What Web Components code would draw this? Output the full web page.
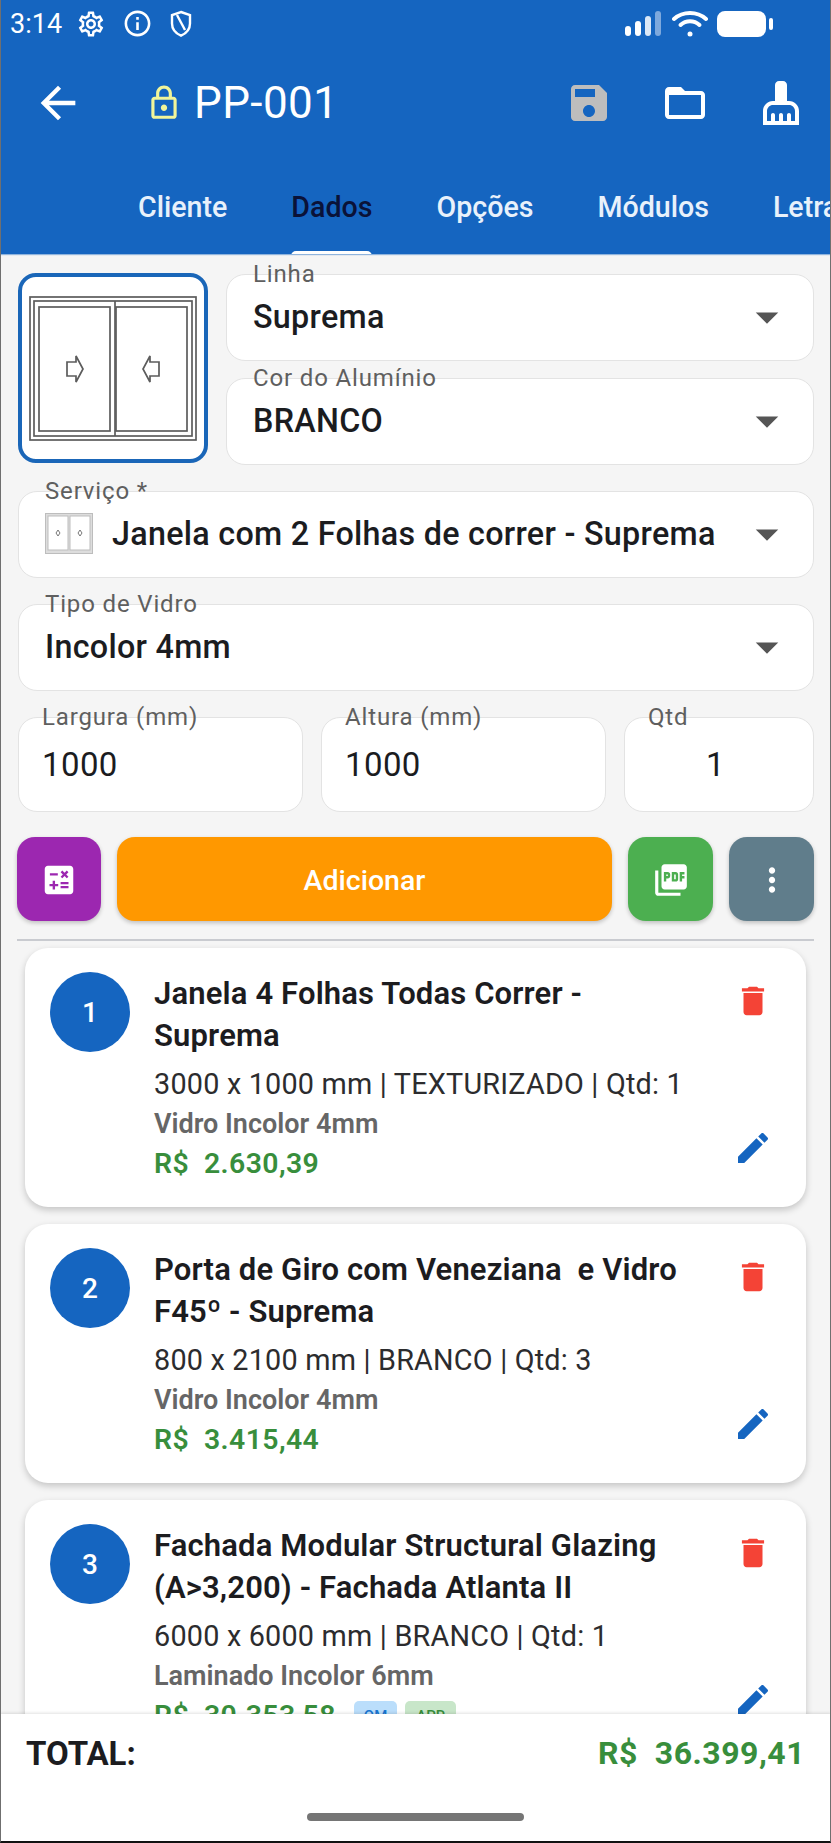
<!DOCTYPE html>
<html lang="pt-BR">
<head>
<meta charset="utf-8">
<title>PP-001</title>
<style>
  html, body { margin: 0; padding: 0; height: 100%; overflow: hidden; background: #f5f5f5; font-family: Roboto, "Liberation Sans", sans-serif; }
  [slot="form-top"] > div { display: flex; flex-direction: column; gap: 17px; padding-top: 1px; }
</style>
</head>
<body>
<app-screen>
  <app-header slot="header"></app-header>

  <div slot="form-top">
    <window-thumb></window-thumb>
    <div>
      <app-field label="Linha" value="Suprema" select></app-field>
      <app-field label="Cor do Alumínio" value="BRANCO" select></app-field>
    </div>
  </div>

  <app-field slot="form" label="Serviço *" value="Janela com 2 Folhas de correr - Suprema" select thumb></app-field>
  <app-field slot="form" label="Tipo de Vidro" value="Incolor 4mm" select></app-field>
  <app-number-row slot="form"></app-number-row>
  <app-actions slot="form"></app-actions>

  <item-card slot="items" number="1" title-text="Janela 4 Folhas Todas Correr - Suprema" sub="3000 x 1000 mm | TEXTURIZADO | Qtd: 1" glass="Vidro Incolor 4mm" price="R$&nbsp; 2.630,39"></item-card>
  <item-card slot="items" number="2" title-text="Porta de Giro com Veneziana&nbsp; e Vidro F45º - Suprema" sub="800 x 2100 mm | BRANCO | Qtd: 3" glass="Vidro Incolor 4mm" price="R$&nbsp; 3.415,44"></item-card>
  <item-card slot="items" number="3" title-text="Fachada Modular Structural Glazing (A&gt;3,200) - Fachada Atlanta II" sub="6000 x 6000 mm | BRANCO | Qtd: 1" glass="Laminado Incolor 6mm" price="R$&nbsp; 30.353,58" tags></item-card>

  <total-bar slot="footer" value="R$&nbsp; 36.399,41"></total-bar>
</app-screen>

<script>
// Material icon paths
const ICONS = {
  back: 'M20 11H7.83l5.59-5.59L12 4l-8 8 8 8 1.41-1.41L7.83 13H20v-2z',
  lock: 'M18 8h-1V6c0-2.76-2.24-5-5-5S7 3.24 7 6v2H6c-1.1 0-2 .9-2 2v10c0 1.1.9 2 2 2h12c1.1 0 2-.9 2-2V10c0-1.1-.9-2-2-2zM9 6c0-1.66 1.34-3 3-3s3 1.34 3 3v2H9V6zm9 14H6V10h12v10zm-6-3c1.1 0 2-.9 2-2s-.9-2-2-2-2 .9-2 2 .9 2 2 2z',
  save: 'M17 3H5c-1.11 0-2 .9-2 2v14c0 1.1.89 2 2 2h14c1.1 0 2-.9 2-2V7l-4-4zm-5 16c-1.66 0-3-1.34-3-3s1.34-3 3-3 3 1.34 3 3-1.34 3-3 3zm3-10H5V5h10v4z',
  folder: 'M20 6h-8l-2-2H4c-1.1 0-1.99.9-1.99 2L2 18c0 1.1.9 2 2 2h16c1.1 0 2-.9 2-2V8c0-1.1-.9-2-2-2zm0 12H4V8h16v10z',
  broom: 'M16 11h-1V3c0-1.1-.9-2-2-2h-2c-1.1 0-2 .9-2 2v8H8c-2.76 0-5 2.24-5 5v7h18v-7c0-2.76-2.24-5-5-5zm3 10h-2v-3c0-.55-.45-1-1-1s-1 .45-1 1v3h-2v-3c0-.55-.45-1-1-1s-1 .45-1 1v3H9v-3c0-.55-.45-1-1-1s-1 .45-1 1v3H5v-5c0-1.65 1.35-3 3-3h8c1.65 0 3 1.35 3 3v5z',
  drop: 'M7 10l5 5 5-5z',
  calc: 'M19 3H5c-1.1 0-2 .9-2 2v14c0 1.1.9 2 2 2h14c1.1 0 2-.9 2-2V5c0-1.1-.9-2-2-2zm-5.97 4.06L14.09 6l1.41 1.41L16.91 6l1.06 1.06-1.41 1.41 1.41 1.41-1.06 1.06-1.41-1.4-1.41 1.41-1.06-1.06 1.41-1.41-1.41-1.42zm-6.78.66h5v1.5h-5v-1.5zM11.5 16h-2v2H8v-2H6v-1.5h2v-2h1.5v2h2V16zm6.5 1.25h-5v-1.5h5v1.5zm0-2.5h-5v-1.5h5v1.5z',
  pdf: 'M20 2H8c-1.1 0-2 .9-2 2v12c0 1.1.9 2 2 2h12c1.1 0 2-.9 2-2V4c0-1.1-.9-2-2-2zm-8.5 7.5c0 .83-.67 1.5-1.5 1.5H9v2H7.5V7H10c.83 0 1.5.67 1.5 1.5v1zm5 2c0 .83-.67 1.5-1.5 1.5h-2.5V7H15c.83 0 1.5.67 1.5 1.5v3zm4-3H19v1h1.5V11H19v2h-1.5V7h3v1.5zM9 9.5h1v-1H9v1zM4 6H2v14c0 1.1.9 2 2 2h14v-2H4V6zm10 5.5h1v-3h-1v3z',
  more: 'M12 8c1.1 0 2-.9 2-2s-.9-2-2-2-2 .9-2 2 .9 2 2 2zm0 2c-1.1 0-2 .9-2 2s.9 2 2 2 2-.9 2-2-.9-2-2-2zm0 6c-1.1 0-2 .9-2 2s.9 2 2 2 2-.9 2-2-.9-2-2-2z',
  trash: 'M6 19c0 1.1.9 2 2 2h8c1.1 0 2-.9 2-2V7H6v12zM19 4h-3.5l-1-1h-5l-1 1H5v2h14V4z',
  edit: 'M3 17.25V21h3.75L17.81 9.94l-3.75-3.75L3 17.25zM20.71 7.04c.39-.39.39-1.02 0-1.41l-2.34-2.34c-.39-.39-1.02-.39-1.41 0l-1.83 1.83 3.75 3.75 1.83-1.83z',
  info: 'M11 7h2v2h-2zm0 4h2v6h-2zm1-9C6.48 2 2 6.48 2 12s4.48 10 10 10 10-4.48 10-10S17.52 2 12 2zm0 18c-4.41 0-8-3.59-8-8s3.59-8 8-8 8 3.59 8 8-3.59 8-8 8z',
  gear: 'M19.43 12.98c.04-.32.07-.64.07-.98 0-.34-.03-.66-.07-.98l2.11-1.65c.19-.15.24-.42.12-.64l-2-3.46c-.09-.16-.26-.25-.44-.25-.06 0-.12.01-.17.03l-2.49 1c-.52-.4-1.08-.73-1.69-.98l-.38-2.65C14.46 2.18 14.25 2 14 2h-4c-.25 0-.46.18-.49.42l-.38 2.65c-.61.25-1.17.59-1.69.98l-2.49-1c-.06-.02-.12-.03-.18-.03-.17 0-.34.09-.43.25l-2 3.46c-.13.22-.07.49.12.64l2.11 1.65c-.04.32-.07.65-.07.98 0 .33.03.66.07.98l-2.11 1.65c-.19.15-.24.42-.12.64l2 3.46c.09.16.26.25.44.25.06 0 .12-.01.17-.03l2.49-1c.52.4 1.08.73 1.69.98l.38 2.65c.03.24.24.42.49.42h4c.25 0 .46-.18.49-.42l.38-2.65c.61-.25 1.17-.59 1.69-.98l2.49 1c.06.02.12.03.18.03.17 0 .34-.09.43-.25l2-3.46c.12-.22.07-.49-.12-.64l-2.11-1.65zm-1.98-1.71c.04.31.05.52.05.73 0 .21-.02.43-.05.73l-.14 1.13.89.7 1.08.84-.7 1.21-1.27-.51-1.04-.42-.9.68c-.43.32-.84.56-1.25.73l-1.06.43-.16 1.13-.2 1.35h-1.4l-.19-1.35-.16-1.13-1.06-.43c-.43-.18-.83-.41-1.23-.71l-.91-.7-1.06.43-1.27.51-.7-1.21 1.08-.84.89-.7-.14-1.13c-.03-.31-.05-.54-.05-.74s.02-.43.05-.73l.14-1.13-.89-.7-1.08-.84.7-1.21 1.27.51 1.04.42.9-.68c.43-.32.84-.56 1.25-.73l1.06-.43.16-1.13.2-1.35h1.39l.19 1.35.16 1.13 1.06.43c.43.18.83.41 1.23.71l.91.7 1.06-.43 1.27-.51.7 1.21-1.07.85-.89.7.14 1.13zM12 8c-2.21 0-4 1.79-4 4s1.79 4 4 4 4-1.79 4-4-1.79-4-4-4zm0 6c-1.1 0-2-.9-2-2s.9-2 2-2 2 .9 2 2-.9 2-2 2z'
};

class MatIcon extends HTMLElement {
  connectedCallback() {
    const size = this.getAttribute('size') || 24;
    const color = this.getAttribute('color') || 'currentColor';
    const name = this.getAttribute('name');
    this.attachShadow({ mode: 'open' }).innerHTML = `
      <style>:host { display: block; width: ${size}px; height: ${size}px; flex: none; } svg { display: block; }</style>
      <svg width="${size}" height="${size}" viewBox="0 0 24 24" fill="${color}"><path d="${ICONS[name]}"/></svg>`;
  }
}

class AppScreen extends HTMLElement {
  constructor() {
    super();
    this.attachShadow({ mode: 'open' }).innerHTML = `
      <style>
        :host { display: flex; flex-direction: column; height: 1843px; width: 831px; background: #f5f5f5; overflow: hidden; position: relative; }
        :host::after { content: ""; position: absolute; inset: 0; z-index: 2; pointer-events: none; border-left: 1px solid #6f6f6f; border-right: 1px solid #6f6f6f; border-bottom: 2px solid #111; }
        .form { display: flex; flex-direction: column; gap: 26px; padding: 19px 17px 0 18px; }
        .divider { height: 2px; background: #c9cbd0; margin: 18px 17px 0 17px; flex: none; }
        .items { flex: 1; min-height: 0; overflow: hidden; display: flex; flex-direction: column; gap: 17px; padding: 7px 25px 0 25px; }
        ::slotted([slot="form-top"]) { display: grid; grid-template-columns: 190px 1fr; gap: 18px; }
      </style>
      <slot name="header"></slot>
      <div class="form">
        <slot name="form-top"></slot>
        <slot name="form"></slot>
      </div>
      <div class="divider"></div>
      <div class="items"><slot name="items"></slot></div>
      <slot name="footer"></slot>`;
  }
}

class AppHeader extends HTMLElement {
  constructor() {
    super();
    this.attachShadow({ mode: 'open' }).innerHTML = `
      <style>
        :host { display: block; flex: none; background: #1565c0; color: #fff; height: 254px; box-shadow: 0 1px 1px rgba(21,101,192,.45); position: relative; z-index: 1; }
        .status { height: 47px; display: flex; align-items: center; padding: 0 58px 0 10px; font-size: 27px; }
        .status .time { width: 65px; }
        .status .left { display: flex; align-items: center; gap: 16px; margin-left: 1px; }
        .status .right { margin-left: auto; display: flex; align-items: center; gap: 9px; }
        .toolbar { height: 112px; display: flex; align-items: center; padding: 0 26px 0 32px; }
        .lock { margin-left: 61px; }
        .title { font-size: 44px; margin-left: 11px; flex: 1; letter-spacing: .4px; }
        .actions { display: flex; gap: 48px; }
        .tabs { height: 95px; display: flex; align-items: center; gap: 64px; padding-left: 138px; overflow: hidden; font-size: 28.600px; font-weight: 500; white-space: nowrap; }
        .tab { position: relative; height: 95px; line-height: 97px; color: #e8f1fb; }
        .tab.on { color: #0a1238; }
        .tab.on::after { content: ""; position: absolute; left: 0; right: 0; bottom: -2px; height: 5px; background: #fff; border-radius: 5px 5px 0 0; }
      </style>
      <div class="status">
        <span class="time">3:14</span>
        <span class="left">
          <mat-icon name="gear" size="30" color="#fff"></mat-icon>
          <mat-icon name="info" size="31" color="#fff"></mat-icon>
          <svg width="24" height="28" viewBox="0 0 24 28" fill="none" stroke="#fff" stroke-width="2.4"><path d="M12 2l9 3.2v8.3c0 5.6-3.8 9.9-9 12.2-5.2-2.3-9-6.6-9-12.2V5.2z"/><path d="M8 5l8 15"/></svg>
        </span>
        <span class="right">
          <svg width="38" height="26" viewBox="0 0 38 26"><rect x="0" y="15" width="6" height="10" rx="3" fill="#fff"/><rect x="10" y="10" width="6" height="15" rx="3" fill="#fff"/><rect x="20" y="5" width="6" height="20" rx="3" fill="#dbe8f7"/><rect x="30" y="0" width="6" height="25" rx="3" fill="#7ea9dd"/></svg>
          <svg width="36" height="28" viewBox="0 0 36 28" fill="none" stroke="#fff" stroke-width="4" stroke-linecap="round"><path d="M2 9c9-8 23-8 32 0"/><path d="M8.500 15c5.500-5 13.500-5 19 0"/><circle cx="18" cy="24" r="2.500" fill="#fff" stroke="none"/></svg>
          <svg width="56" height="28" viewBox="0 0 56 28"><rect x="0" y="1" width="49" height="26" rx="8" fill="#fff"/><rect x="52" y="8" width="4" height="12" rx="2" fill="#fff"/></svg>
        </span>
      </div>
      <div class="toolbar">
        <mat-icon name="back" size="52" color="#fff"></mat-icon>
        <mat-icon class="lock" name="lock" size="38" color="#f1f59a"></mat-icon>
        <span class="title">PP-001</span>
        <div class="actions">
          <mat-icon name="save" size="48" color="#bdbdbd"></mat-icon>
          <mat-icon name="folder" size="48" color="#fff"></mat-icon>
          <mat-icon name="broom" size="48" color="#fff"></mat-icon>
        </div>
      </div>
      <div class="tabs">
        <span class="tab">Cliente</span>
        <span class="tab on">Dados</span>
        <span class="tab">Opções</span>
        <span class="tab">Módulos</span>
        <span class="tab">Letra</span>
      </div>`;
  }
}

class WindowThumb extends HTMLElement {
  constructor() {
    super();
    this.attachShadow({ mode: 'open' }).innerHTML = `
      <style>
        :host { display: block; width: 190px; height: 190px; box-sizing: border-box; border: 4px solid #1a66b8; border-radius: 18px; background: #fff; }
        svg { display: block; }
      </style>
      <svg width="182" height="182" viewBox="0 0 182 182" fill="none" stroke="#5c5c5c" stroke-width="1.700">
        <rect x="8" y="20" width="166" height="143"/>
        <rect x="12" y="24" width="158" height="135"/>
        <rect x="17" y="30" width="71" height="124"/>
        <path d="M93 24v135"/>
        <rect x="94" y="30" width="71" height="124"/>
        <path d="M45 85h9v-6l7 13-7 13v-6h-9z"/>
        <path d="M137 85h-9v-6l-7 13 7 13v-6h9z"/>
      </svg>`;
  }
}

class AppField extends HTMLElement {
  connectedCallback() {
    const select = this.hasAttribute('select');
    const thumb = this.hasAttribute('thumb');
    const numeric = this.hasAttribute('numeric');
    const center = this.hasAttribute('center');
    const padRight = select ? 19 : center ? 30 : 24;
    this.attachShadow({ mode: 'open' }).innerHTML = `
      <style>
        :host { display: block; position: relative; }
        .box { box-sizing: border-box; height: ${numeric ? 95 : 87}px; background: #fff; border: 1.500px solid #e3e3e3; border-radius: 19px; display: flex; align-items: center; padding: 0 ${padRight}px ${numeric ? 0 : 2}px ${numeric ? 23 : 26}px; }
        .label { position: absolute; left: ${numeric ? 18 : 21}px; top: -14px; padding: 0 6px; font-size: 24px; line-height: 28px; letter-spacing: .85px; color: #5f5f5f; background: linear-gradient(#f5f5f5 50%, transparent 50%); white-space: nowrap; }
        .value { flex: 1; font-size: ${numeric ? 33 : 32.3}px; font-weight: ${numeric ? 400 : 500}; color: #1b1c1f; white-space: nowrap; letter-spacing: ${numeric ? 0.4 : 0.28}px; ${center ? 'text-align: center;' : ''} }
        .mini { width: 48px; height: 41px; margin-right: 19px; flex: none; display: block; }
      </style>
      <div class="box">
        ${thumb ? `<svg class="mini" viewBox="0 0 48 41" fill="#fff" stroke="#bdbdbd" stroke-width="1"><rect x=".5" y=".5" width="47" height="40" fill="#ddd"/><rect x="3" y="3" width="20" height="34"/><rect x="25" y="3" width="20" height="34"/><path d="M13 17l2 3-2 3-2-3zM35 17l2 3-2 3-2-3z" stroke="#777"/></svg>` : ''}
        <span class="value">${this.getAttribute('value')}</span>
        ${select ? '<mat-icon name="drop" size="54" color="#555"></mat-icon>' : ''}
      </div>
      <span class="label">${this.getAttribute('label')}</span>`;
  }
}

class AppNumberRow extends HTMLElement {
  constructor() {
    super();
    this.attachShadow({ mode: 'open' }).innerHTML = `
      <style>:host { display: grid; grid-template-columns: 285px 285px 1fr; gap: 18px; }</style>
      <app-field numeric label="Largura (mm)" value="1000"></app-field>
      <app-field numeric label="Altura (mm)" value="1000"></app-field>
      <app-field numeric center label="Qtd" value="1"></app-field>`;
  }
}

class ActionButton extends HTMLElement {
  connectedCallback() {
    const bg = this.getAttribute('bg');
    this.attachShadow({ mode: 'open' }).innerHTML = `
      <style>
        :host { display: flex; align-items: center; justify-content: center; box-sizing: border-box; height: 84px; padding-top: 2px; border-radius: 18px; background: ${bg}; color: #fff; font-size: 28.500px; font-weight: 500; box-shadow: 0 2px 4px rgba(0,0,0,.22); }
      </style>
      <slot></slot>`;
  }
}

class AppActions extends HTMLElement {
  constructor() {
    super();
    this.attachShadow({ mode: 'open' }).innerHTML = `
      <style>:host { display: grid; grid-template-columns: 84px 1fr 85px 85px; gap: 16px; margin-left: -1px; margin-top: -1px; }</style>
      <action-button bg="#9c27b0"><mat-icon name="calc" size="38" color="#fff"></mat-icon></action-button>
      <action-button bg="#ff9800">Adicionar</action-button>
      <action-button bg="#4caf50"><mat-icon name="pdf" size="38" color="#fff"></mat-icon></action-button>
      <action-button bg="#607d8b"><mat-icon name="more" size="38" color="#fff"></mat-icon></action-button>`;
  }
}

class ItemCard extends HTMLElement {
  connectedCallback() {
    const tags = this.hasAttribute('tags');
    this.attachShadow({ mode: 'open' }).innerHTML = `
      <style>
        :host { display: grid; grid-template-columns: 80px 1fr 48px; column-gap: 24px; flex: none; box-sizing: border-box; height: 259px; padding: 24px 29px 0 25px; background: #fff; border-radius: 23px; box-shadow: 0 3px 7px rgba(0,0,0,.2); }
        .num { width: 80px; height: 80px; border-radius: 50%; background: #1565c0; color: #fff; display: flex; align-items: center; justify-content: center; font-size: 28px; font-weight: 500; }
        .title { font-size: 31px; line-height: 42px; font-weight: 600; color: #1c1c1f; margin-top: 1px; letter-spacing: .15px; }
        .sub { font-size: 28.800px; line-height: 36px; color: #2c2c2e; margin-top: 9px; letter-spacing: .2px; white-space: nowrap; }
        .glass { font-size: 27px; line-height: 36px; font-weight: 600; color: #666; margin-top: 4px; }
        .price { font-size: 28.400px; line-height: 38px; font-weight: 600; color: #388e3c; margin-top: 3px; display: flex; align-items: center; gap: 18px; letter-spacing: .4px; }
        .tag { font-size: 15px; line-height: 20px; font-weight: 500; padding: 5px 10px; border-radius: 5px; letter-spacing: 0; }
        .om { background: #bbdefb; color: #1976d2; }
        .apr { background: #c8e6c9; color: #388e3c; margin-left: -10px; padding: 5px 11px; }
        .side { display: flex; flex-direction: column; align-items: center; justify-content: space-between; height: 186px; margin-top: 10px; }
      </style>
      <div class="num">${this.getAttribute('number')}</div>
      <div>
        <div class="title">${this.getAttribute('title-text')}</div>
        <div class="sub">${this.getAttribute('sub')}</div>
        <div class="glass">${this.getAttribute('glass')}</div>
        <div class="price"><span>${this.getAttribute('price')}</span>${tags ? '<span class="tag om">OM</span><span class="tag apr">APR</span>' : ''}</div>
      </div>
      <div class="side">
        <mat-icon name="trash" size="38" color="#f44336"></mat-icon>
        <mat-icon name="edit" size="40" color="#1565c0"></mat-icon>
      </div>`;
  }
}

class TotalBar extends HTMLElement {
  connectedCallback() {
    this.attachShadow({ mode: 'open' }).innerHTML = `
      <style>
        :host { display: block; flex: none; height: 129px; box-sizing: border-box; background: #fff; position: relative; z-index: 1; box-shadow: 0 -1px 3px rgba(0,0,0,.12); padding: 0 26px; }
        .row { display: flex; justify-content: space-between; align-items: center; height: 78px; }
        .lbl { font-size: 33px; font-weight: 700; color: #1c1c1f; }
        .val { font-size: 32px; font-weight: 700; color: #388e3c; letter-spacing: .5px; }
        .home { width: 217px; height: 8px; border-radius: 4px; background: #757575; margin: 21px auto 0; }
      </style>
      <div class="row"><span class="lbl">TOTAL:</span><span class="val">${this.getAttribute('value')}</span></div>
      <div class="home"></div>`;
  }
}

customElements.define('mat-icon', MatIcon);
customElements.define('app-screen', AppScreen);
customElements.define('app-header', AppHeader);
customElements.define('window-thumb', WindowThumb);
customElements.define('app-field', AppField);
customElements.define('app-number-row', AppNumberRow);
customElements.define('action-button', ActionButton);
customElements.define('app-actions', AppActions);
customElements.define('item-card', ItemCard);
customElements.define('total-bar', TotalBar);
</script>
</body>
</html>
